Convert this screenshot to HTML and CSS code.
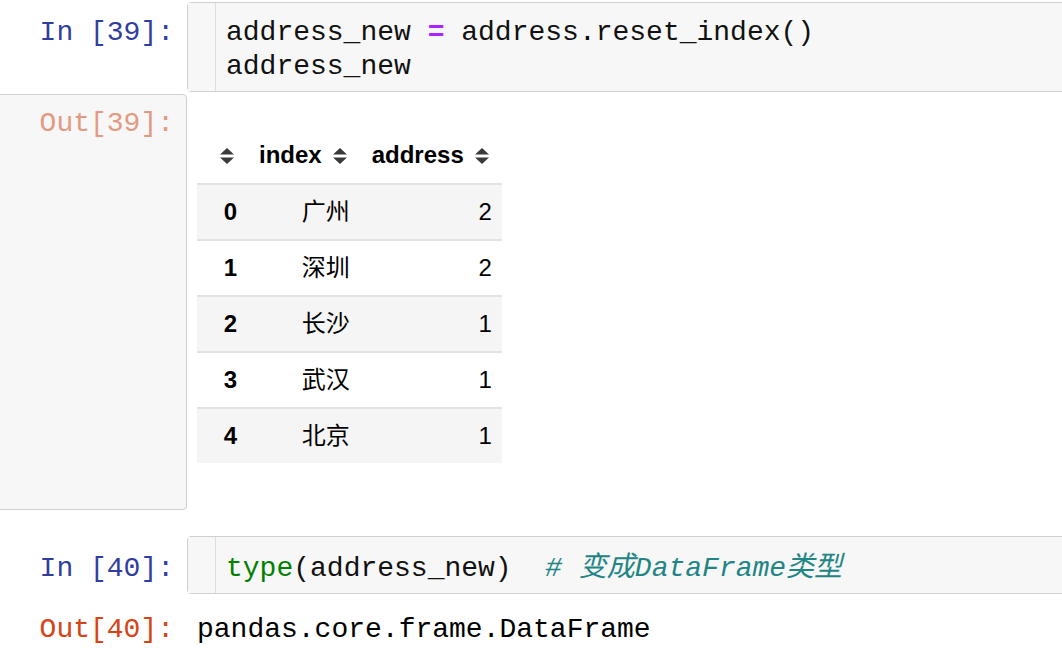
FILE: index.html
```html
<!DOCTYPE html>
<html>
<head>
<meta charset="utf-8">
<link rel="stylesheet" href="styles.css">
</head>
<body>
<div class="notebook">
  <div class="row cell-in first">
    <div class="prompt in-prompt">In&nbsp;[39]:</div>
    <div class="input">
      <div class="gutter"></div>
      <pre class="code">address_new <span class="op">=</span> address.reset_index()
address_new</pre>
    </div>
  </div>

  <div class="row cell-out">
    <div class="prompt out-box"><span class="out-faded">Out[39]:</span></div>
    <div class="output">
      <table class="df">
        <thead>
          <tr>
            <th><svg class="sort" viewBox="0 0 16 18"><polygon points="8,1 15,7.6 1,7.6"/><polygon points="1,10.4 15,10.4 8,17"/></svg></th>
            <th>index<svg class="sort" viewBox="0 0 16 18"><polygon points="8,1 15,7.6 1,7.6"/><polygon points="1,10.4 15,10.4 8,17"/></svg></th>
            <th>address<svg class="sort" viewBox="0 0 16 18"><polygon points="8,1 15,7.6 1,7.6"/><polygon points="1,10.4 15,10.4 8,17"/></svg></th>
          </tr>
        </thead>
        <tbody>
          <tr><th class="idx">0</th><td>广州</td><td>2</td></tr>
          <tr><th class="idx">1</th><td>深圳</td><td>2</td></tr>
          <tr><th class="idx">2</th><td>长沙</td><td>1</td></tr>
          <tr><th class="idx">3</th><td>武汉</td><td>1</td></tr>
          <tr><th class="idx">4</th><td>北京</td><td>1</td></tr>
        </tbody>
      </table>
    </div>
  </div>

  <div class="row cell-in second">
    <div class="prompt in-prompt">In&nbsp;[40]:</div>
    <div class="input single">
      <div class="gutter"></div>
      <pre class="code"><span class="builtin">type</span>(address_new)  <span class="comment"># 变成DataFrame类型</span></pre>
    </div>
  </div>

  <div class="row cell-result">
    <div class="prompt out-prompt">Out[40]:</div>
    <pre class="result">pandas.core.frame.DataFrame</pre>
  </div>
</div>
</body>
</html>
```

FILE: styles.css
```css
html, body {
  margin: 0;
  padding: 0;
  background: #ffffff;
  overflow: hidden;
}

.notebook {
  display: flex;
  flex-direction: column;
  padding-top: 2px;
  width: 1062px;
  font-family: "Liberation Mono", "Noto Sans CJK SC", monospace;
  font-size: 28px;
  line-height: 34px;
}

.row {
  display: flex;
  align-items: flex-start;
}

.prompt {
  width: 174px;
  flex: none;
  padding-right: 13px;
  text-align: right;
  white-space: nowrap;
  font-family: "Liberation Mono", monospace;
  font-size: 28px;
  line-height: 34px;
}

.in-prompt {
  color: #303f9f;
  padding-top: 14px;
}

.second .in-prompt {
  padding-top: 16px;
}

.input {
  flex: 1;
  display: flex;
  margin-right: -12px;
  background: #f7f7f7;
  border: 1px solid #cfcfcf;
  border-radius: 4px;
}

.gutter {
  width: 27px;
  flex: none;
  border-right: 1px solid #dddddd;
  background: #f7f7f7;
}

.code {
  margin: 0;
  padding: 13px 10px 7px 10px;
  font-family: "Liberation Mono", "Noto Sans CJK SC", monospace;
  font-size: 28px;
  line-height: 34px;
  color: #111111;
}

.single .code {
  padding: 15px 10px 7px 10px;
}

.op {
  color: #aa22ff;
  font-weight: bold;
}

.builtin {
  color: #008000;
}

.comment {
  color: #1f8585;
  font-style: italic;
}

.cell-out {
  margin-top: 2px;
}

.out-box {
  box-sizing: border-box;
  width: 197px;
  margin-left: -10px;
  height: 416px;
  padding-top: 12px;
  padding-right: 12px;
  background: #f7f7f7;
  border: 1px solid #cfcfcf;
  border-radius: 4px;
}

.out-faded {
  color: #e39a83;
}

.output {
  padding-left: 10px;
  padding-top: 33px;
}

.df {
  border-collapse: separate;
  border-spacing: 0;
  font-family: "Liberation Sans", "Noto Sans CJK SC", sans-serif;
  font-size: 24px;
  line-height: 32px;
  color: #000000;
}

.df thead th {
  padding: 12px 12px;
  text-align: left;
  font-weight: bold;
  white-space: nowrap;
}

.sort {
  width: 16px;
  height: 18px;
  margin-left: 10px;
  vertical-align: -2px;
  fill: #3a3a3a;
}

.df tbody th,
.df tbody td {
  padding: 11px 10px 11px 12px;
  border-top: 2px solid #e2e2e2;
  text-align: right;
}

.df tbody th.idx {
  font-weight: bold;
}

.df tbody td {
  font-weight: normal;
}

.df tbody tr:nth-child(odd) th,
.df tbody tr:nth-child(odd) td {
  background: #f5f5f5;
}

.cell-in.second {
  margin-top: 26px;
}

.cell-result {
  margin-top: 19px;
}

.out-prompt {
  color: #d84315;
}

.result {
  margin: 0;
  padding-left: 10px;
  font-family: "Liberation Mono", monospace;
  font-size: 28px;
  line-height: 34px;
  color: #000000;
}
```
